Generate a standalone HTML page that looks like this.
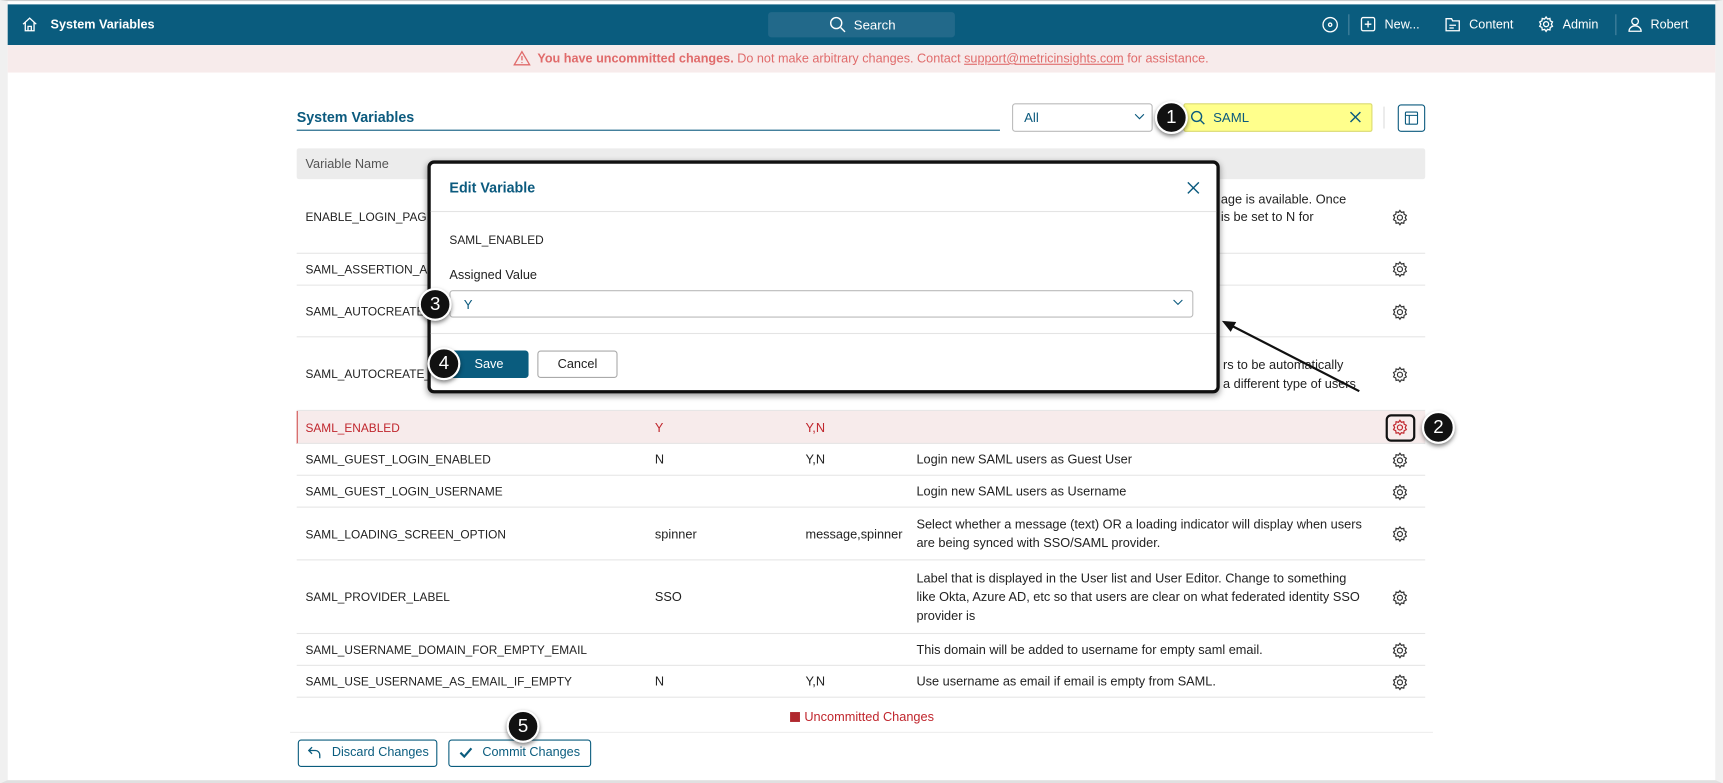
<!DOCTYPE html>
<html><head><meta charset="utf-8"><style>
*{box-sizing:border-box;margin:0;padding:0}
html,body{width:1723px;height:783px;overflow:hidden;background:#fff}
#w{position:absolute;left:0;top:0;width:1568px;height:713px;transform:scale(1.09885);transform-origin:0 0;font-family:"Liberation Sans",sans-serif;font-size:12px;color:#222;background:#fff}
.a{position:absolute}
.t{position:absolute;white-space:nowrap;line-height:14px}
.n{font-size:10.8px}
.d{font-size:11.6px}
.top{left:7px;top:4px;width:1554px;height:37px;background:#0a5c7e;color:#fff}
.row{position:absolute;left:270px;width:1027px;border-bottom:1px solid #e6e6e6}
.gear{position:absolute;left:1266px;width:16px;height:16px}
.badge{position:absolute;width:30px;height:30px;border-radius:50%;background:#111;border:2px solid #fff;color:#fff;font-size:17px;text-align:center;line-height:26px;box-shadow:0 2px 4px rgba(0,0,0,.5)}
.btn{position:absolute;height:25px;border:1px solid #0a5c7e;border-radius:3px;color:#0a5c7e;font-size:11.5px;line-height:23px}
</style></head><body><div id="w">
<div class="a" style="left:0;top:0;width:1568px;height:713px;border:1px solid #ccc;border-left:7px solid #f0f0f0;border-right:7px solid #f0f0f0;border-bottom:3px solid #e0e0e0"></div>
<div class="a top">
<svg class="a" style="left:13px;top:11px" width="14" height="14" viewBox="0 0 14 14" fill="none" stroke="#fff" stroke-width="1.2"><path d="M1 7L7 1.5 13 7M3 5.5V13h8V5.5M5.5 13V9h3v4"/></svg>
<div class="t" style="left:39px;top:12px;font-weight:bold;font-size:11.5px">System Variables</div>
<div class="a" style="left:692px;top:7px;width:170px;height:23px;background:#22698a;border-radius:3px"></div>
<svg class="a" style="left:748px;top:11px" width="15" height="15" viewBox="0 0 15 15" fill="none" stroke="#fff" stroke-width="1.3"><circle cx="6" cy="6" r="5"/><path d="M10 10l4 4"/></svg>
<div class="t" style="left:770px;top:12px">Search</div>
<svg class="a" style="left:1196px;top:11px" width="15" height="15" viewBox="0 0 15 15" fill="none" stroke="#fff" stroke-width="1.2"><circle cx="7.5" cy="7.5" r="6.5"/><circle cx="7.5" cy="7.5" r="1.5"/></svg>
<div class="a" style="left:1220px;top:9px;width:1px;height:19px;background:#4b86a0"></div>
<svg class="a" style="left:1231px;top:11px" width="14" height="14" viewBox="0 0 14 14" fill="none" stroke="#fff" stroke-width="1.2"><rect x="1" y="1" width="12" height="12" rx="1.5"/><path d="M7 4v6M4 7h6"/></svg>
<div class="t" style="left:1253px;top:12px;font-size:11.5px">New...</div>
<svg class="a" style="left:1308px;top:11px" width="14" height="14" viewBox="0 0 14 14" fill="none" stroke="#fff" stroke-width="1.2"><path d="M1 2h5l1 2h6v9H1z M4 8h6M4 10.5h4"/></svg>
<div class="t" style="left:1330px;top:12px;font-size:11.5px">Content</div>
<svg class="a" style="left:1392px;top:10px" width="16" height="16" viewBox="0 0 16 16" fill="none" stroke="#fff" stroke-width="1.2"><circle cx="8" cy="8" r="2.3"/><path d="M8 1.5l1.3 1.8 2.2-.5.3 2.2 2 1-1 2 1 2-2 1-.3 2.2-2.2-.5L8 14.5l-1.3-1.8-2.2.5-.3-2.2-2-1 1-2-1-2 2-1 .3-2.2 2.2.5z"/></svg>
<div class="t" style="left:1415px;top:12px;font-size:11.5px">Admin</div>
<div class="a" style="left:1463px;top:9px;width:1px;height:19px;background:#4b86a0"></div>
<svg class="a" style="left:1474px;top:11px" width="14" height="14" viewBox="0 0 14 14" fill="none" stroke="#fff" stroke-width="1.2"><circle cx="7" cy="4.5" r="3"/><path d="M1.5 13.5c0-3 2.5-5 5.5-5s5.5 2 5.5 5z"/></svg>
<div class="t" style="left:1495px;top:12px;font-size:11.5px">Robert</div>
</div>
<div class="a" style="left:7px;top:41px;width:1554px;height:25px;background:#f7ebeb"></div>
<svg class="a" style="left:467px;top:46px" width="16" height="14" viewBox="0 0 16 14" fill="none" stroke="#e06b6b" stroke-width="1.2"><path d="M8 1L15 13H1z M8 5v4M8 10.5v1"/></svg>
<div class="t" style="left:489px;top:47px;color:#e06b6b;font-size:11.5px">
<b>You have uncommitted changes.</b> Do not make arbitrary changes. Contact <u>support@metricinsights.com</u> for assistance.</div>

<div class="t" style="left:270px;top:100px;color:#0b5a7e;font-weight:bold;font-size:13px">System Variables</div>
<div class="a" style="left:270px;top:118px;width:640px;height:1px;background:#0b5a7e"></div>
<div class="a" style="left:921px;top:94px;width:128px;height:26px;border:1px solid #bbb;border-radius:3px;background:#fff"></div>
<div class="t" style="left:932px;top:100px;color:#0b5a7e">All</div>
<svg class="a" style="left:1032px;top:103px" width="10" height="7" viewBox="0 0 10 7" fill="none" stroke="#0b5a7e"><path d="M1 1l4 4 4-4"/></svg>
<div class="a" style="left:1077px;top:94px;width:172px;height:26px;background:#ffff8c;border:1px solid #dada70;border-radius:2px"></div>
<svg class="a" style="left:1083px;top:100px" width="14" height="14" viewBox="0 0 14 14" fill="none" stroke="#0b5a7e" stroke-width="1.3"><circle cx="6" cy="6" r="4.5"/><path d="M9.5 9.5L13 13"/></svg>
<div class="t" style="left:1104px;top:100px;color:#0b5a7e">SAML</div>
<svg class="a" style="left:1228px;top:101px" width="11" height="11" viewBox="0 0 11 11" stroke="#0b5a7e" stroke-width="1.3"><path d="M1 1l9 9M10 1l-9 9"/></svg>
<div class="a" style="left:1259px;top:97px;width:1px;height:20px;background:#ddd"></div>
<div class="a" style="left:1272px;top:95px;width:25px;height:25px;border:1px solid #0b5a7e;border-radius:3px"></div>
<svg class="a" style="left:1278px;top:101px" width="13" height="13" viewBox="0 0 13 13" fill="none" stroke="#0b5a7e"><rect x="1" y="1" width="11" height="11" rx="1"/><path d="M1 4h11M4.5 4v8"/></svg>

<div class="a" style="left:270px;top:135px;width:1027px;height:28px;background:#ececec;border-radius:2px"></div>
<div class="t d" style="left:278px;top:143px;color:#555">Variable Name</div>

<div class="row" style="top:163px;height:68px"></div>
<div class="t n" style="left:278px;top:191px">ENABLE_LOGIN_PAGE</div>
<div class="t d" style="left:1111px;top:175px">age is available. Once</div>
<div class="t d" style="left:1111px;top:191px">is be set to N for</div>
<div class="row" style="top:231px;height:29px"></div>
<div class="t n" style="left:278px;top:239px">SAML_ASSERTION_A</div>
<div class="row" style="top:260px;height:47px"></div>
<div class="t n" style="left:278px;top:277px">SAML_AUTOCREATE</div>
<div class="row" style="top:307px;height:67px"></div>
<div class="t n" style="left:278px;top:334px">SAML_AUTOCREATE_</div>
<div class="t d" style="left:1113px;top:326px">rs to be automatically</div>
<div class="t d" style="left:1113px;top:343px">a different type of users</div>
<div class="row" style="top:374px;height:30px;background:#f7ebeb;border-left:1px solid #d05050"></div>
<div class="t n" style="left:278px;top:383px;color:#c0262d">SAML_ENABLED</div>
<div class="t d" style="left:596px;top:383px;color:#c0262d">Y</div>
<div class="t d" style="left:733px;top:383px;color:#c0262d">Y,N</div>
<div class="row" style="top:404px;height:29px"></div>
<div class="t n" style="left:278px;top:412px">SAML_GUEST_LOGIN_ENABLED</div>
<div class="t d" style="left:596px;top:412px">N</div><div class="t d" style="left:733px;top:412px">Y,N</div>
<div class="t d" style="left:834px;top:412px">Login new SAML users as Guest User</div>
<div class="row" style="top:433px;height:29px"></div>
<div class="t n" style="left:278px;top:441px">SAML_GUEST_LOGIN_USERNAME</div>
<div class="t d" style="left:834px;top:441px">Login new SAML users as Username</div>
<div class="row" style="top:462px;height:48px"></div>
<div class="t n" style="left:278px;top:480px">SAML_LOADING_SCREEN_OPTION</div>
<div class="t d" style="left:596px;top:480px">spinner</div><div class="t d" style="left:733px;top:480px">message,spinner</div>
<div class="t d" style="left:834px;top:471px">Select whether a message (text) OR a loading indicator will display when users</div>
<div class="t d" style="left:834px;top:488px">are being synced with SSO/SAML provider.</div>
<div class="row" style="top:510px;height:67px"></div>
<div class="t n" style="left:278px;top:537px">SAML_PROVIDER_LABEL</div>
<div class="t d" style="left:596px;top:537px">SSO</div>
<div class="t d" style="left:834px;top:520px">Label that is displayed in the User list and User Editor. Change to something</div>
<div class="t d" style="left:834px;top:537px">like Okta, Azure AD, etc so that users are clear on what federated identity SSO</div>
<div class="t d" style="left:834px;top:554px">provider is</div>
<div class="row" style="top:577px;height:29px"></div>
<div class="t n" style="left:278px;top:585px">SAML_USERNAME_DOMAIN_FOR_EMPTY_EMAIL</div>
<div class="t d" style="left:834px;top:585px">This domain will be added to username for empty saml email.</div>
<div class="row" style="top:606px;height:29px"></div>
<div class="t n" style="left:278px;top:614px">SAML_USE_USERNAME_AS_EMAIL_IF_EMPTY</div>
<div class="t d" style="left:596px;top:614px">N</div><div class="t d" style="left:733px;top:614px">Y,N</div>
<div class="t d" style="left:834px;top:614px">Use username as email if email is empty from SAML.</div>

<svg width="0" height="0" style="position:absolute"><defs><symbol id="g" viewBox="0 0 16 16"><circle cx="8" cy="8" r="2.3" fill="none"/><path fill="none" d="M8 1.5l1.3 1.8 2.2-.5.3 2.2 2 1-1 2 1 2-2 1-.3 2.2-2.2-.5L8 14.5l-1.3-1.8-2.2.5-.3-2.2-2-1 1-2-1-2 2-1 .3-2.2 2.2.5z"/></symbol></defs></svg>
<svg class="gear" style="top:190px" stroke="#333" stroke-width="1.1"><use href="#g"/></svg>
<svg class="gear" style="top:237px" stroke="#333" stroke-width="1.1"><use href="#g"/></svg>
<svg class="gear" style="top:276px" stroke="#333" stroke-width="1.1"><use href="#g"/></svg>
<svg class="gear" style="top:333px" stroke="#333" stroke-width="1.1"><use href="#g"/></svg>
<div class="a" style="left:1261px;top:377px;width:27px;height:25px;border:2px solid #111;border-radius:5px;background:#f7ebeb"></div>
<svg class="gear" style="top:381px" stroke="#c0262d" stroke-width="1.1"><use href="#g"/></svg>
<svg class="gear" style="top:411px" stroke="#333" stroke-width="1.1"><use href="#g"/></svg>
<svg class="gear" style="top:440px" stroke="#333" stroke-width="1.1"><use href="#g"/></svg>
<svg class="gear" style="top:478px" stroke="#333" stroke-width="1.1"><use href="#g"/></svg>
<svg class="gear" style="top:536px" stroke="#333" stroke-width="1.1"><use href="#g"/></svg>
<svg class="gear" style="top:584px" stroke="#333" stroke-width="1.1"><use href="#g"/></svg>
<svg class="gear" style="top:613px" stroke="#333" stroke-width="1.1"><use href="#g"/></svg>

<div class="a" style="left:719px;top:648px;width:9px;height:9px;background:#b0282e"></div>
<div class="t d" style="left:732px;top:646px;color:#c0262d">Uncommitted Changes</div>
<div class="a" style="left:264px;top:666px;width:1040px;height:1px;background:#eee"></div>
<div class="btn" style="left:271px;top:673px;width:127px;padding-left:30px">Discard Changes</div>
<svg class="a" style="left:280px;top:679px" width="12" height="12" viewBox="0 0 12 12" fill="none" stroke="#0a5c7e" stroke-width="1.2"><path d="M4 1L1 4l3 3M1 4h6a4 4 0 014 4v3"/></svg>
<div class="btn" style="left:408px;top:673px;width:130px;padding-left:30px">Commit Changes</div>
<svg class="a" style="left:418px;top:680px" width="12" height="10" viewBox="0 0 12 10" fill="none" stroke="#0a5c7e" stroke-width="2"><path d="M1 5l3.5 3.5L11 1"/></svg>

<div class="a" style="left:389px;top:146px;width:721px;height:212px;background:#fff;border:3px solid #111;border-radius:6px;box-shadow:0 2px 6px rgba(0,0,0,.4)"></div>
<div class="t" style="left:409px;top:164px;color:#0b5a7e;font-weight:bold;font-size:13px">Edit Variable</div>
<svg class="a" style="left:1080px;top:165px" width="12" height="12" viewBox="0 0 12 12" stroke="#0b5a7e" stroke-width="1.3"><path d="M1 1l10 10M11 1L1 11"/></svg>
<div class="a" style="left:392px;top:192px;width:715px;height:1px;background:#e4e4e4"></div>
<div class="t n" style="left:409px;top:212px">SAML_ENABLED</div>
<div class="t d" style="left:409px;top:244px">Assigned Value</div>
<div class="a" style="left:409px;top:264px;width:677px;height:25px;border:1px solid #bbb;border-radius:3px"></div>
<div class="t" style="left:422px;top:270px;color:#0b5a7e">Y</div>
<svg class="a" style="left:1067px;top:272px" width="10" height="7" viewBox="0 0 10 7" fill="none" stroke="#0b5a7e"><path d="M1 1l4 4 4-4"/></svg>
<div class="a" style="left:392px;top:303px;width:715px;height:1px;background:#e4e4e4"></div>
<div class="a d" style="left:409px;top:319px;width:72px;height:25px;background:#0a5c7e;border-radius:3px;color:#fff;text-align:center;line-height:25px">Save</div>
<div class="a d" style="left:489px;top:319px;width:73px;height:25px;border:1px solid #aaa;border-radius:3px;text-align:center;line-height:23px">Cancel</div>

<svg class="a" style="left:0;top:0" width="1568" height="713"><path d="M1237 356L1120 296" stroke="#111" stroke-width="2"/><path d="M1112 292l13 1-5 9z" fill="#111"/></svg>
<div class="badge" style="left:1051px;top:92px">1</div>
<div class="badge" style="left:1294px;top:374px">2</div>
<div class="badge" style="left:381px;top:262px">3</div>
<div class="badge" style="left:389px;top:316px">4</div>
<div class="badge" style="left:461px;top:646px">5</div>
</div></body></html>
